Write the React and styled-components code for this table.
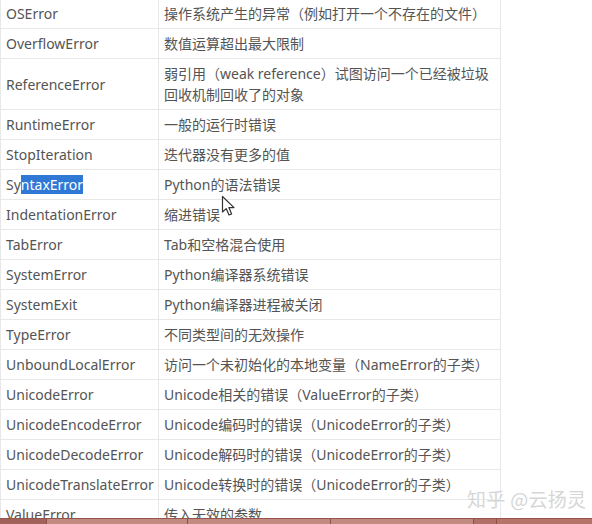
import React from 'react'
import styled, { createGlobalStyle } from 'styled-components'

const GlobalStyle = createGlobalStyle`
  html, body {
    margin: 0;
    padding: 0;
    background: #ffffff;
  }
  body {
    width: 592px;
    height: 524px;
    overflow: hidden;
  }
`

const Page = styled.div`
  position: relative;
  width: 592px;
  height: 524px;
  overflow: hidden;
  background: #fff;
  font-family: 'Noto Sans', 'Noto Sans CJK SC', sans-serif;
  text-spacing-trim: space-all;
`

const Table = styled.table`
  border-collapse: collapse;
  width: 501px;
  margin-top: -2px;
  table-layout: fixed;
  font-size: 14px;
  color: #545454;
`

const Cell = styled.td`
  border: 1px solid #e8e8e8;
  padding: 4px 5px 4px 5px;
  line-height: 21px;
  vertical-align: middle;
  white-space: nowrap;
  width: ${(p) => (p.$name ? '147px' : 'auto')};
`

const Selected = styled.span`
  background: #2f78d6;
  color: #ffffff;
`

const Pointer = styled.svg`
  position: absolute;
  left: 221px;
  top: 195px;
`

const Watermark = styled.div`
  position: absolute;
  left: 467px;
  top: 486px;
  font-size: 19px;
  line-height: 26px;
  color: #d6d6d6;
  letter-spacing: 0.3px;
  text-shadow: 0 0 2px #ffffff;
  font-family: 'Noto Sans CJK SC', sans-serif;
`

const TaskBar = styled.div`
  position: absolute;
  left: 0;
  bottom: 0;
  width: 592px;
  height: 5px;
  display: flex;
  background: #b5736a;
  border-top: 1px solid #96544c;
`

const TaskSlot = styled.div`
  width: ${(p) => p.$w}px;
  background: ${(p) => p.$bg};
  border-right: 1px solid #8f4f47;
`

const rows = [
  ['OSError', '操作系统产生的异常（例如打开一个不存在的文件）'],
  ['OverflowError', '数值运算超出最大限制'],
  ['ReferenceError', ['弱引用（weak reference）试图访问一个已经被垃圾', '回收机制回收了的对象']],
  ['RuntimeError', '一般的运行时错误'],
  ['StopIteration', '迭代器没有更多的值'],
  ['SyntaxError', 'Python的语法错误'],
  ['IndentationError', '缩进错误'],
  ['TabError', 'Tab和空格混合使用'],
  ['SystemError', 'Python编译器系统错误'],
  ['SystemExit', 'Python编译器进程被关闭'],
  ['TypeError', '不同类型间的无效操作'],
  ['UnboundLocalError', '访问一个未初始化的本地变量（NameError的子类）'],
  ['UnicodeError', 'Unicode相关的错误（ValueError的子类）'],
  ['UnicodeEncodeError', 'Unicode编码时的错误（UnicodeError的子类）'],
  ['UnicodeDecodeError', 'Unicode解码时的错误（UnicodeError的子类）'],
  ['UnicodeTranslateError', 'Unicode转换时的错误（UnicodeError的子类）'],
  ['ValueError', '传入无效的参数'],
]

const renderName = (name) =>
  name === 'SyntaxError' ? (
    <>
      Sy<Selected>ntaxError</Selected>
    </>
  ) : (
    name
  )

const App = () => {
  return (
    <Page>
      <GlobalStyle />
      <Table>
        <tbody>
          {rows.map(([name, desc]) => (
            <tr key={name}>
              <Cell $name>{renderName(name)}</Cell>
              <Cell>
                {Array.isArray(desc)
                  ? desc.map((line, i) => (
                      <React.Fragment key={i}>
                        {i > 0 && <br />}
                        {line}
                      </React.Fragment>
                    ))
                  : desc}
              </Cell>
            </tr>
          ))}
        </tbody>
      </Table>
      <Pointer width="16" height="22" viewBox="0 0 16 22">
        <path
          d="M1.5 1.5 L1.5 17 L5.2 13.6 L8 20 L10.6 18.9 L7.9 12.6 L13 12.6 Z"
          fill="#ffffff"
          stroke="#333333"
          strokeWidth="1.2"
          strokeLinejoin="round"
        />
      </Pointer>
      <Watermark>知乎 @云扬灵</Watermark>
      <TaskBar>
        <TaskSlot $w={46} $bg="#a0625a" />
        <TaskSlot $w={140} $bg="#c18b82" />
        <TaskSlot $w={142} $bg="#c18b82" />
        <TaskSlot $w={142} $bg="#c18b82" />
        <TaskSlot $w={22} $bg="#b07068" />
      </TaskBar>
    </Page>
  )
}

export default App
